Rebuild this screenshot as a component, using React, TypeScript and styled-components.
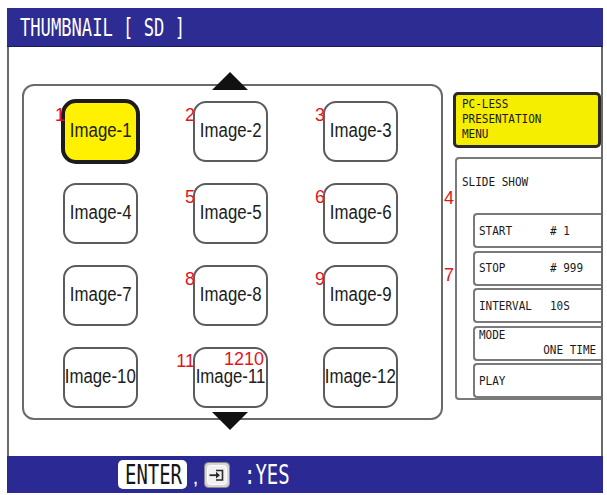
import React from "react";
import styled, { createGlobalStyle, css } from "styled-components";

const GlobalStyle = createGlobalStyle`
  html, body {
    margin: 0;
    padding: 0;
    background: #ffffff;
  }
  body {
    width: 607px;
    height: 495px;
    overflow: hidden;
  }
`;

const MONO = `"DejaVu Sans Mono", "Liberation Mono", monospace`;
const SANS = `"Liberation Sans", Arial, sans-serif`;

interface Thumb {
  label: string;
  num?: string;
  inner?: string;
  selected?: boolean;
}

const thumbs: Thumb[] = [
  { label: "Image-1", num: "1", selected: true },
  { label: "Image-2", num: "2" },
  { label: "Image-3", num: "3" },
  { label: "Image-4" },
  { label: "Image-5", num: "5" },
  { label: "Image-6", num: "6" },
  { label: "Image-7" },
  { label: "Image-8", num: "8" },
  { label: "Image-9", num: "9" },
  { label: "Image-10" },
  { label: "Image-11", num: "11", inner: "1210" },
  { label: "Image-12" },
];

const Screen = styled.div`
  width: 607px;
  height: 495px;
  box-sizing: border-box;
  padding: 8px 4px 2px 7px;
`;

const Frame = styled.div`
  height: 100%;
  display: flex;
  flex-direction: column;
`;

const TitleBar = styled.div`
  height: 39px;
  flex-shrink: 0;
  box-sizing: border-box;
  background: #2d2c92;
  border-bottom: 1px solid #1c1b5a;
  display: flex;
  align-items: center;
  padding-left: 13px;
  color: #ffffff;
  font-family: ${MONO};
  font-size: 25px;
  white-space: pre;
`;

// squeezes the gothic-style fonts horizontally
const Narrow = styled.span<{ $sx: number; $origin?: string }>`
  display: inline-block;
  white-space: pre;
  transform: scaleX(${(p) => p.$sx});
  transform-origin: ${(p) => p.$origin ?? "left"} center;
`;

const Body = styled.div`
  flex: 1;
  display: flex;
  align-items: flex-start;
  gap: 10px;
  padding: 37px 0 0 13px;
  border-left: 2px solid #6a6a6a;
  border-right: 2px solid #6a6a6a;
`;

const Panel = styled.div`
  position: relative;
  width: 421px;
  height: 336px;
  flex-shrink: 0;
  box-sizing: border-box;
  border: 2px solid #6b6b6b;
  border-radius: 12px;
  padding: 15px 0 0 39px;
  display: grid;
  grid-template-columns: repeat(3, 75px);
  grid-template-rows: repeat(4, 61px);
  column-gap: 55px;
  row-gap: 21px;
`;

const Arrow = styled.svg<{ $top: number }>`
  position: absolute;
  left: 188px;
  top: ${(p) => p.$top}px;
  width: 36px;
  height: 18px;
`;

const Cell = styled.div<{ $selected?: boolean }>`
  position: relative;
  box-sizing: border-box;
  border: 2px solid #5c5c5c;
  border-radius: 13px;
  background: #ffffff;
  display: flex;
  align-items: center;
  justify-content: center;
  padding-bottom: 3px;
  color: #202020;
  font-family: ${SANS};
  font-size: 20px;

  ${(p) =>
    p.$selected &&
    css`
      background: #fff100;
      border-color: #1c1c1c;
      box-shadow: 0 0 0 2px #1c1c1c;
    `}
`;

const Badge = styled.span<{ $inside?: boolean }>`
  position: absolute;
  top: 3px;
  color: #e3141d;
  font-family: ${SANS};
  font-size: 18px;
  line-height: 1;
  ${(p) =>
    p.$inside
      ? css`
          right: 2px;
          top: 1px;
        `
      : css`
          right: 100%;
        `}
`;

const SideNum = styled.span<{ $top: number }>`
  position: absolute;
  right: calc(100% + 3px);
  top: ${(p) => p.$top}px;
  color: #e3141d;
  font-family: ${SANS};
  font-size: 18px;
  line-height: 1;
`;

const Sidebar = styled.div`
  flex: 1;
  margin-top: 8px;
  display: flex;
  flex-direction: column;
  gap: 9px;
  font-family: ${MONO};
  font-size: 12.5px;
  line-height: 14px;
  color: #1a1a1a;
`;

const MenuBox = styled.div`
  height: 56px;
  box-sizing: border-box;
  background: #f6ee00;
  border: 3px solid #2a2a2a;
  border-radius: 5px;
  padding: 1px 0 0 6px;
  display: flex;
  flex-direction: column;
  line-height: 15px;
`;

const SlideBox = styled.div`
  position: relative;
  height: 243px;
  margin-left: 2px;
  box-sizing: border-box;
  border: 2px solid #7a7a7a;
  border-right: none;
  border-radius: 4px 0 0 4px;
  padding: 16px 0 0 5px;
  display: flex;
  flex-direction: column;
`;

const Buttons = styled.div`
  margin: 24px 0 0 11px;
  display: flex;
  flex-direction: column;
  gap: 2.5px;
`;

const SlideButton = styled.div<{ $stacked?: boolean }>`
  height: 35px;
  box-sizing: border-box;
  border: 2px solid #7a7a7a;
  border-right: none;
  border-radius: 4px 0 0 4px;
  padding: 0 5px 0 4px;
  display: flex;
  align-items: center;

  ${(p) =>
    p.$stacked &&
    css`
      flex-direction: column;
      align-items: stretch;
      justify-content: space-between;
      padding-top: 0;
      padding-bottom: 2px;
    `}
`;

const Key = styled.span`
  width: 71px;
  flex-shrink: 0;
`;

const RightLine = styled.div`
  display: flex;
  justify-content: flex-end;
`;

const StatusBar = styled.div`
  height: 37px;
  flex-shrink: 0;
  background: #2b2a95;
  display: flex;
  align-items: center;
  padding-left: 111px;
  color: #ffffff;
  font-family: ${MONO};
  font-size: 27px;
`;

const EnterKey = styled.div`
  width: 69px;
  height: 29px;
  box-sizing: border-box;
  background: #ffffff;
  border-radius: 5px;
  color: #151515;
  display: flex;
  align-items: center;
  padding-left: 7px;
  overflow: hidden;
`;

const Comma = styled.span`
  width: 17px;
  text-align: center;
  font-family: ${SANS};
  font-size: 20px;
  align-self: flex-end;
  padding-bottom: 4px;
`;

const KeyIcon = styled.svg`
  width: 26px;
  height: 26px;
  flex-shrink: 0;
`;

const Yes = styled.span`
  margin-left: 14px;
`;

const EnterIcon: React.FC = () => (
  <KeyIcon viewBox="0 0 26 26">
    <rect x="0.5" y="0.5" width="25" height="25" rx="4" fill="#d6d6d6" stroke="#8a8a8a" />
    <rect x="3.5" y="3.5" width="19" height="19" rx="3" fill="#f1f1f1" stroke="#ffffff" />
    <path d="M12 8.5 H18.5 V18 H12" fill="none" stroke="#2a2a2a" strokeWidth="1.6" />
    <path d="M5.5 13.2 H13" fill="none" stroke="#2a2a2a" strokeWidth="1.8" />
    <polygon points="12,9.8 16,13.2 12,16.6" fill="#2a2a2a" />
  </KeyIcon>
);

export default function App() {
  return (
    <>
      <GlobalStyle />
      <Screen>
        <Frame>
          <TitleBar>
            <Narrow $sx={0.685}>THUMBNAIL [ SD ]</Narrow>
          </TitleBar>

          <Body>
            <Panel>
              <Arrow $top={-14} viewBox="0 0 36 18">
                <polygon points="18,0 36,18 0,18" fill="#111" />
              </Arrow>
              {thumbs.map((t) => (
                <Cell key={t.label} $selected={t.selected}>
                  {t.num && <Badge>{t.num}</Badge>}
                  {t.inner && <Badge $inside>{t.inner}</Badge>}
                  <Narrow $sx={0.84} $origin="center">
                    {t.label}
                  </Narrow>
                </Cell>
              ))}
              <Arrow $top={326} viewBox="0 0 36 18">
                <polygon points="0,0 36,0 18,18" fill="#111" />
              </Arrow>
            </Panel>

            <Sidebar>
              <MenuBox>
                <Narrow $sx={0.88}>PC-LESS</Narrow>
                <Narrow $sx={0.88}>PRESENTATION</Narrow>
                <Narrow $sx={0.88}>MENU</Narrow>
              </MenuBox>

              <SlideBox>
                <SideNum $top={30}>4</SideNum>
                <SideNum $top={107}>7</SideNum>
                <Narrow $sx={0.88}>SLIDE SHOW</Narrow>
                <Buttons>
                  <SlideButton>
                    <Key>
                      <Narrow $sx={0.88}>START</Narrow>
                    </Key>
                    <Narrow $sx={0.88}># 1</Narrow>
                  </SlideButton>
                  <SlideButton>
                    <Key>
                      <Narrow $sx={0.88}>STOP</Narrow>
                    </Key>
                    <Narrow $sx={0.88}># 999</Narrow>
                  </SlideButton>
                  <SlideButton>
                    <Key>
                      <Narrow $sx={0.88}>INTERVAL</Narrow>
                    </Key>
                    <Narrow $sx={0.88}>10S</Narrow>
                  </SlideButton>
                  <SlideButton $stacked>
                    <Narrow $sx={0.88}>MODE</Narrow>
                    <RightLine>
                      <Narrow $sx={0.88} $origin="right">
                        ONE TIME
                      </Narrow>
                    </RightLine>
                  </SlideButton>
                  <SlideButton>
                    <Narrow $sx={0.88}>PLAY</Narrow>
                  </SlideButton>
                </Buttons>
              </SlideBox>
            </Sidebar>
          </Body>

          <StatusBar>
            <EnterKey>
              <Narrow $sx={0.7}>ENTER</Narrow>
            </EnterKey>
            <Comma>,</Comma>
            <EnterIcon />
            <Yes>
              <Narrow $sx={0.7}>:YES</Narrow>
            </Yes>
          </StatusBar>
        </Frame>
      </Screen>
    </>
  );
}
